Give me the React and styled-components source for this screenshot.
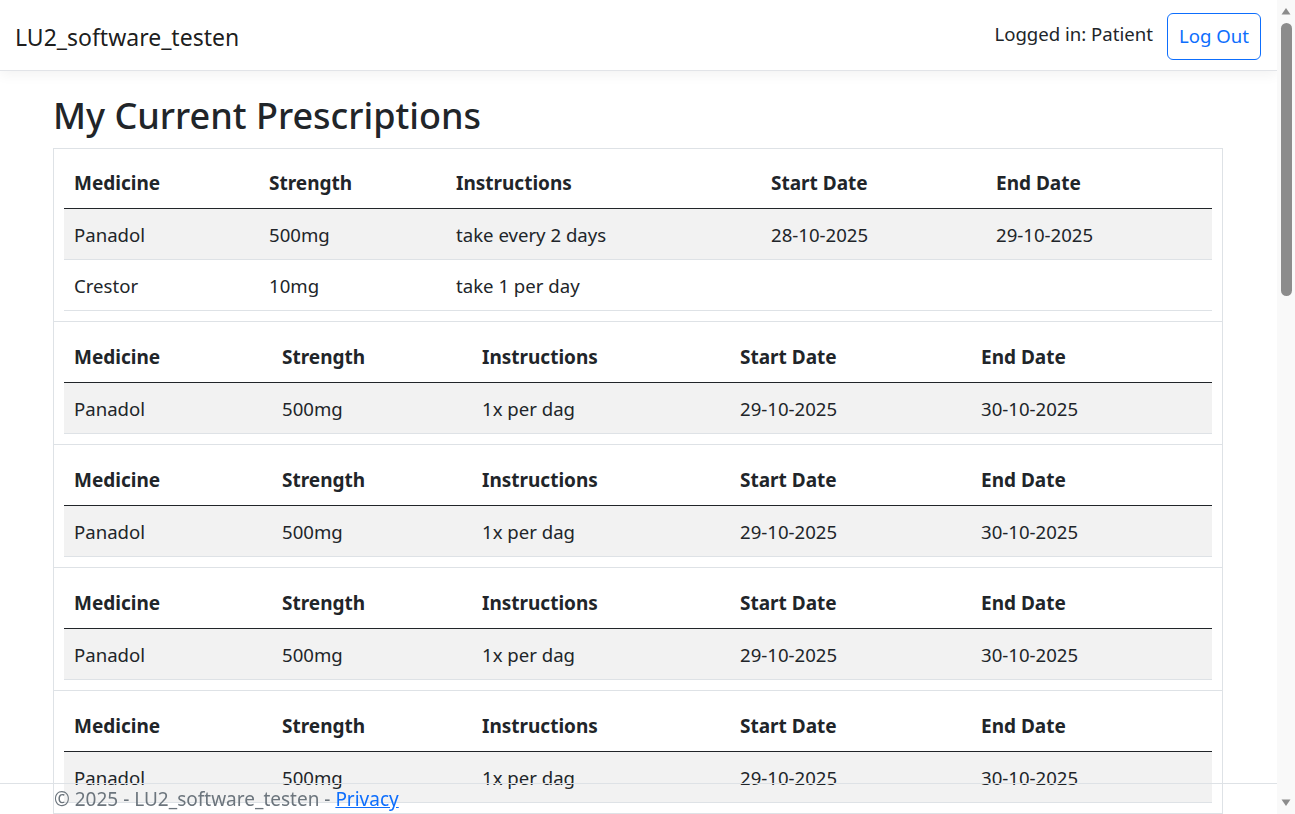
import React from 'react';
import styled, { createGlobalStyle } from 'styled-components';

const firstSection = {
    widths: [195, 187, 315, 225, 226],
    rows: [
        ['Panadol', '500mg', 'take every 2 days', '28-10-2025', '29-10-2025'],
        ['Crestor', '10mg', 'take 1 per day', '', ''],
    ],
};

const laterSection = {
    widths: [208, 200, 258, 241, 241],
    rows: [['Panadol', '500mg', '1x per dag', '29-10-2025', '30-10-2025']],
};

const sections = [firstSection, laterSection, laterSection, laterSection, laterSection];

const headers = ['Medicine', 'Strength', 'Instructions', 'Start Date', 'End Date'];

const App = () => {
    return (
        <>
            <GlobalStyle />
            <Navbar>
                <Brand>LU2_software_testen</Brand>
                <NavRight>
                    <LoggedIn>Logged in: Patient</LoggedIn>
                    <LogOutButton>Log Out</LogOutButton>
                </NavRight>
            </Navbar>

            <Main>
                <Title>My Current Prescriptions</Title>
                <PrescriptionList>
                    {sections.map((section, i) => (
                        <Section key={i}>
                            <Table>
                                <colgroup>
                                    {section.widths.map((w, c) => (
                                        <col key={c} style={{ width: w }} />
                                    ))}
                                </colgroup>
                                <thead>
                                    <tr>
                                        {headers.map((h) => (
                                            <Th key={h}>{h}</Th>
                                        ))}
                                    </tr>
                                </thead>
                                <tbody>
                                    {section.rows.map((row, r) => (
                                        <Tr key={r} $striped={r % 2 === 0}>
                                            {row.map((cell, c) => (
                                                <Td key={c}>{cell}</Td>
                                            ))}
                                        </Tr>
                                    ))}
                                </tbody>
                            </Table>
                        </Section>
                    ))}
                </PrescriptionList>
            </Main>

            <Footer>
                © 2025 - LU2_software_testen - <FooterLink href="#">Privacy</FooterLink>
            </Footer>

            {/* window scrollbar as it shows in the browser */}
            <ScrollBar>
                <ScrollArrow viewBox="0 0 18 18">
                    <path d="M4.5 14.5 L9 8 L13.5 14.5 Z" fill="#8c8c8c" />
                </ScrollArrow>
                <ScrollTrack>
                    <ScrollThumb />
                </ScrollTrack>
                <ScrollArrow viewBox="0 0 18 18">
                    <path d="M4.5 3.5 L9 10 L13.5 3.5 Z" fill="#8c8c8c" />
                </ScrollArrow>
            </ScrollBar>
        </>
    );
};

export default App;

/* ========= CSS STYLED COMPONENTS ========= */

const GlobalStyle = createGlobalStyle`
    body {
        margin: 0 18px 0 0;
        font-family: "Noto Sans", "Open Sans", sans-serif;
        font-size: 18.6px;
        color: #212529;
        background: #fff;
    }
`;

const Navbar = styled.nav`
    display: flex;
    align-items: center;
    justify-content: space-between;
    height: 70px;
    padding: 0 16px 0 15px;
    border-bottom: 1px solid #e2e4e8;
    box-shadow: 0 4px 12px rgba(0, 0, 0, 0.05);
    background: #fff;
`;

const Brand = styled.div`
    font-size: 23px;
    line-height: 32px;
    margin-top: 3px;
    color: rgba(0, 0, 0, 0.9);
`;

const NavRight = styled.div`
    display: flex;
    align-items: center;
    gap: 14px;
    margin-top: 2px;
`;

const LoggedIn = styled.span`
    line-height: 28px;
    margin-bottom: 5px;
`;

const LogOutButton = styled.button`
    font-family: inherit;
    font-size: 18.6px;
    line-height: 28px;
    height: 47px;
    padding: 0 11px;
    color: #0d6efd;
    background: transparent;
    border: 1px solid #0d6efd;
    border-radius: 6px;
    cursor: pointer;
`;

const Main = styled.main`
    padding: 21px 0 0 53px;
`;

const Title = styled.h1`
    margin: 0 0 8px 0;
    font-size: 36px;
    font-weight: 500;
    line-height: 48px;
`;

const PrescriptionList = styled.div`
    width: 1170px;
    box-sizing: border-box;
    border: 1px solid #dee2e6;
`;

const Section = styled.div`
    padding: 10px;

    & + & {
        padding-top: 11px;
        border-top: 1px solid #dee2e6;
    }
`;

const Table = styled.table`
    width: 100%;
    table-layout: fixed;
    border-collapse: collapse;
`;

const Th = styled.th`
    text-align: left;
    font-size: 19px;
    font-weight: 700;
    line-height: 25px;
    padding: 12px 10px 12px;
    border-bottom: 1px solid #212529;
`;

const Tr = styled.tr`
    background: ${({ $striped }) => ($striped ? '#f2f2f2' : 'transparent')};
`;

const Td = styled.td`
    line-height: 25px;
    padding: 13px 10px 12px;
    border-bottom: 1px solid #dee2e6;
`;

const Footer = styled.footer`
    position: fixed;
    left: 0;
    right: 18px;
    bottom: 0;
    padding: 1px 0 0 54px;
    font-size: 19px;
    line-height: 29px;
    border-top: 1px solid #dee2e6;
    color: #6c757d;
    white-space: nowrap;
`;

const FooterLink = styled.a`
    color: #0d6efd;
`;

const ScrollBar = styled.div`
    position: fixed;
    top: 0;
    right: 0;
    bottom: 0;
    width: 18px;
    display: flex;
    flex-direction: column;
    background: #f9f9f9;
`;

const ScrollArrow = styled.svg`
    display: block;
    width: 18px;
    height: 18px;
    flex: none;
`;

const ScrollTrack = styled.div`
    flex: 1;
    display: flex;
    justify-content: center;
    padding-top: 5px;
`;

const ScrollThumb = styled.div`
    width: 11px;
    height: 273px;
    border-radius: 6px;
    background: #8c8c8c;
`;
